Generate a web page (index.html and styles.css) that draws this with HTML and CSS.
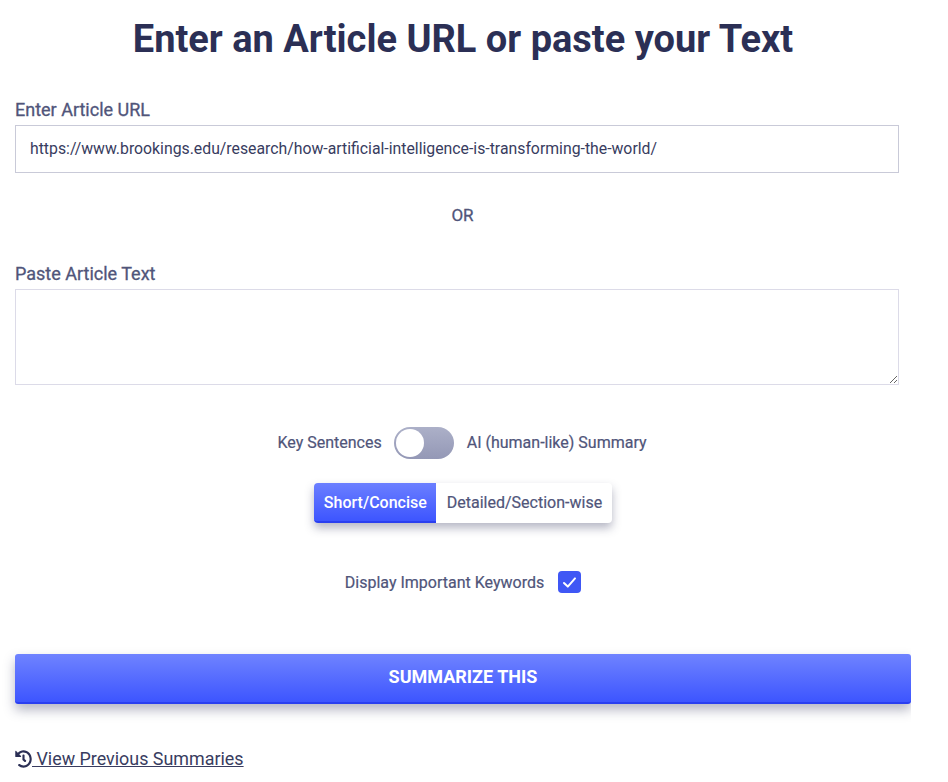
FILE: index.html
```html
<!DOCTYPE html>
<html lang="en">
  <head>
    <meta charset="UTF-8" />
    <meta name="viewport" content="width=device-width, initial-scale=1.0" />
    <link rel="stylesheet" href="styles.css">
  </head>
  <body>
    <div id="container">
      <h1 class="title">Enter an Article URL or paste your Text</h1>

      <label class="field-label url-label" for="url">Enter Article URL</label>
      <input id="url" class="url-input" type="text" value="https://www.brookings.edu/research/how-artificial-intelligence-is-transforming-the-world/" />

      <div class="or">OR</div>

      <label class="field-label text-label" for="text">Paste Article Text</label>
      <textarea id="text" class="text-input"></textarea>

      <div class="toggle-row">
        <span class="toggle-text">Key Sentences</span>
        <span class="switch"><span class="knob"></span></span>
        <span class="toggle-text">AI (human-like) Summary</span>
      </div>

      <div class="segment-row">
        <div class="segment">
          <div class="segment-item active">Short/Concise</div>
          <div class="segment-item">Detailed/Section-wise</div>
        </div>
      </div>

      <div class="keywords-row">
        <span>Display Important Keywords</span>
        <span class="checkbox">
          <svg width="15" height="15" viewBox="0 0 15 15" fill="none" stroke="#fff" stroke-width="2" stroke-linecap="round" stroke-linejoin="round"><path d="M2 8 L5.8 11.6 L13 3.4" /></svg>
        </span>
      </div>

      <button class="submit">SUMMARIZE THIS</button>

      <a class="history" href="#">
        <svg width="17" height="18" viewBox="0 0 512 512" preserveAspectRatio="none" fill="#2b2f55"><path d="M504 255.531c.253 136.64-111.18 248.372-247.82 248.468-59.015.042-113.223-20.53-155.822-54.911-11.077-8.94-11.905-25.541-1.839-35.607l11.267-11.267c8.609-8.609 22.353-9.551 31.891-1.984C173.062 425.135 212.781 440 256 440c101.705 0 184-82.311 184-184 0-101.705-82.311-184-184-184-48.814 0-93.149 18.969-126.068 49.932l50.754 50.754c10.08 10.08 2.941 27.314-11.313 27.314H24c-8.837 0-16-7.163-16-16V38.627c0-14.254 17.234-21.393 27.314-11.314l49.372 49.372C129.209 34.136 189.552 8 256 8c136.81 0 247.747 110.78 248 247.531zm-180.912 78.784l9.823-12.63c8.138-10.463 6.253-25.542-4.21-33.679L288 256.349V152c0-13.255-10.745-24-24-24h-16c-13.255 0-24 10.745-24 24v135.651l65.409 50.874c10.463 8.137 25.541 6.253 33.679-4.21z" /></svg>
        <span> View Previous Summaries</span>
      </a>
    </div>
  </body>
</html>
```

FILE: styles.css
```css
body {
  font-family: Roboto, "Liberation Sans", sans-serif;
  background-color: #fff;
  color: #50557a;
  margin: 0;
  padding: 0;
}

#container {
  width: 896px;
  padding-left: 15px;
  height: 782px;
  overflow: hidden;
}

.title {
  margin: 15px 0 0;
  width: 896px;
  text-align: center;
  font-size: 38px;
  line-height: 48px;
  font-weight: 700;
  color: #2b2f55;
}

.field-label {
  display: block;
  font-size: 18px;
  line-height: 20px;
  font-weight: 400;
  -webkit-text-stroke: 0.3px #50557a;
  color: #50557a;
}

.url-label {
  margin-top: 37px;
}

.url-input {
  display: block;
  box-sizing: border-box;
  width: 884px;
  height: 48px;
  margin: 5px 0 0;
  padding: 0 14px 2px 14px;
  border: 1px solid #c9cad8;
  border-radius: 0;
  outline: none;
  font-family: inherit;
  font-size: 15.8px;
  color: #383c60;
}

.or {
  width: 895px;
  margin-top: 32px;
  text-align: center;
  font-size: 17px;
  line-height: 20px;
  font-weight: 400;
  -webkit-text-stroke: 0.3px #50557a;
}

.text-label {
  margin-top: 39px;
}

.text-input {
  display: block;
  box-sizing: border-box;
  width: 884px;
  height: 96px;
  margin: 5px 0 0;
  border: 1px solid #dcdbe8;
  border-radius: 0;
  outline: none;
  font-family: inherit;
}

.toggle-row,
.keywords-row {
  display: flex;
  justify-content: center;
  align-items: center;
  font-size: 16px;
  font-weight: 400;
  -webkit-text-stroke: 0.2px #50557a;
}

.toggle-row {
  width: 894px;
  margin-top: 42px;
  gap: 12px;
  height: 32px;
}

.toggle-text {
  margin-top: -1px;
}

.switch {
  display: block;
  box-sizing: border-box;
  width: 60px;
  height: 32px;
  padding: 2px;
  margin-right: 1px;
  border-radius: 16px;
  background: linear-gradient(#acb0c8, #9498b6);
}

.knob {
  display: block;
  width: 28px;
  height: 28px;
  border-radius: 50%;
  background-color: #fff;
}

.segment-row {
  display: flex;
  justify-content: center;
  width: 896px;
  margin-top: 24px;
}

.segment {
  display: flex;
  height: 40px;
  border-radius: 4px;
  background-color: #fff;
  box-shadow: 0 5px 10px rgba(43, 47, 85, 0.35);
}

.segment-item {
  display: flex;
  align-items: center;
  padding: 0 10px 2px 11px;
  font-size: 16px;
  font-weight: 400;
  -webkit-text-stroke: 0.2px #50557a;
}

.segment-item.active {
  color: #fff;
  font-weight: 500;
  -webkit-text-stroke: 0;
  padding: 0 9px 0 10px;
  background: linear-gradient(#6b7fff, #3d55ff);
  border-bottom: 2px solid #2a3ff0;
  box-sizing: border-box;
  border-radius: 4px 0 0 4px;
}

.keywords-row {
  width: 896px;
  margin-top: 48px;
  gap: 14px;
  height: 22px;
}

.checkbox {
  display: flex;
  justify-content: center;
  align-items: center;
  width: 23px;
  height: 22px;
  border-radius: 4px;
  background-color: #3f57f5;
}

.submit {
  display: block;
  width: 896px;
  height: 50px;
  margin-top: 61px;
  padding: 0 0 4px;
  border: none;
  border-bottom: 2px solid #2a3ff0;
  border-radius: 3px;
  background: linear-gradient(#6f83ff, #3d55ff);
  color: #fff;
  font-family: inherit;
  font-size: 18px;
  font-weight: 700;
  box-shadow: 0 6px 12px rgba(43, 47, 85, 0.35);
}

.history {
  display: flex;
  align-items: center;
  width: fit-content;
  margin-top: 44px;
  font-size: 17.9px;
  line-height: 22px;
  color: #383c60;
  text-decoration: underline;
  white-space: pre;
}
```
